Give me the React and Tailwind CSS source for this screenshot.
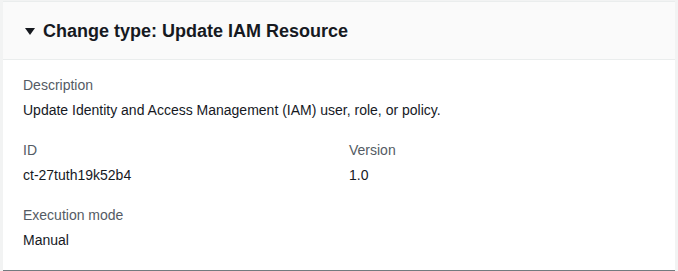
export default function App() {
  return (
    <div className="h-[271px] w-[678px] bg-[#f2f3f3] px-[3px] pt-[1px] font-['Liberation_Sans',Arial,sans-serif] overflow-hidden">
      <div className="bg-white border-t border-[#eaeded] border-b-2 border-b-[#737b80]">
        <div className="h-[58px] bg-[#fafafa] border-b border-[#eaeded] flex items-center pl-[21px] pt-[1px]">
          <svg width="12" height="12" viewBox="0 0 12 12" className="mr-[7px]">
            <path d="M1 3h10L6 10z" fill="#16191f" />
          </svg>
          <h2 className="text-[18px] font-bold text-[#16191f] leading-[22px]">Change type: Update IAM Resource</h2>
        </div>
        <div className="px-5 pt-[15px] pb-5 text-[14px] leading-5">
          <div>
            <div className="text-[#545b64] mb-[5px]">Description</div>
            <div className="text-[#16191f]">Update Identity and Access Management (IAM) user, role, or policy.</div>
          </div>
          <div className="grid grid-cols-2 gap-x-5 mt-5">
            <div>
              <div className="text-[#545b64] mb-[5px]">ID</div>
              <div className="text-[#16191f]">ct-27tuth19k52b4</div>
            </div>
            <div>
              <div className="text-[#545b64] mb-[5px]">Version</div>
              <div className="text-[#16191f]">1.0</div>
            </div>
          </div>
          <div className="mt-5">
            <div className="text-[#545b64] mb-[5px]">Execution mode</div>
            <div className="text-[#16191f]">Manual</div>
          </div>
        </div>
      </div>
    </div>
  );
}
